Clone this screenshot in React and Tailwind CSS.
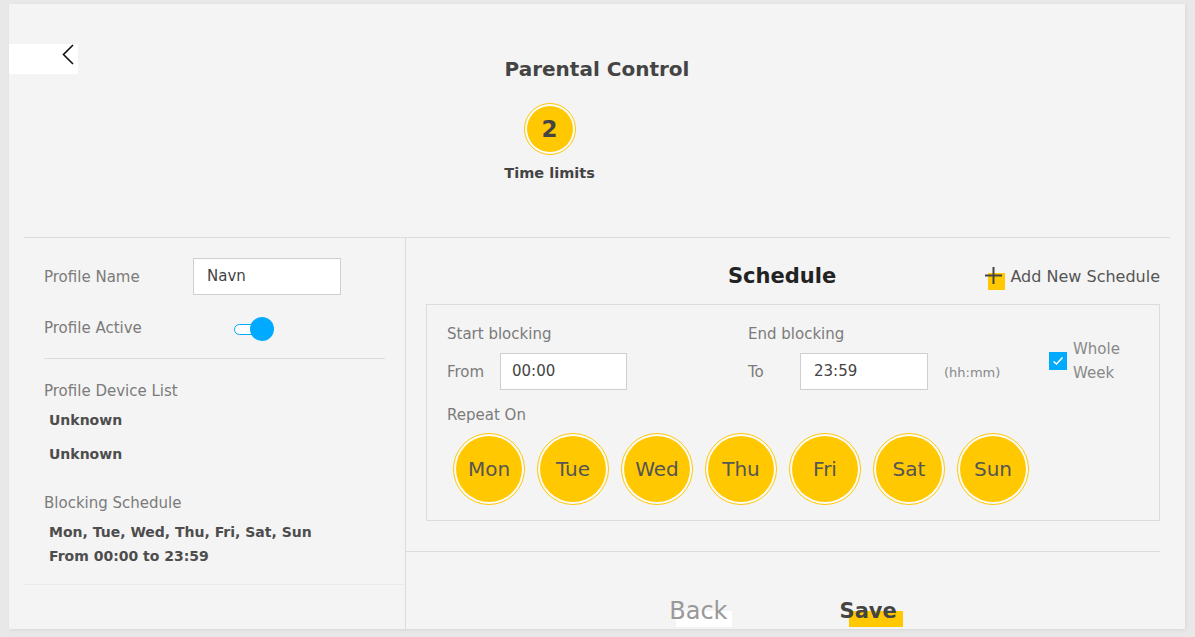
import React from "react";

const days = ["Mon", "Tue", "Wed", "Thu", "Fri", "Sat", "Sun"];

function Ring({ size, children, textClass }) {
  return (
    <div
      className={`${size} rounded-full border border-[#ffc800] p-[2px] bg-[#fbfbfb] flex`}
    >
      <div className={`flex-1 rounded-full bg-[#ffc800] flex items-center justify-center ${textClass}`}>
        {children}
      </div>
    </div>
  );
}

export default function App() {
  return (
    <div className="w-[1195px] h-[637px] bg-[#e8e8e8] pt-[4px] pl-[9px] font-['DejaVu_Sans',sans-serif] overflow-hidden">
      <div className="w-[1176px] h-[625px] bg-[#f4f4f4] shadow-[1px_1px_3px_rgba(0,0,0,0.08)] flex flex-col">
        {/* Header */}
        <div className="relative h-[233px] shrink-0">
          <div className="absolute left-0 top-[40px] w-[69px] h-[30px] bg-white">
            <svg className="absolute left-[53px] top-0" width="12" height="22" viewBox="0 0 12 22">
              <path d="M11 1 L1.5 10.5 L11 20" fill="none" stroke="#111" strokeWidth="1.6" />
            </svg>
          </div>
          <div className="w-fit mx-auto pt-[51px] flex flex-col items-start">
            <div className="text-[20px] leading-[28px] font-bold text-[#444]">Parental Control</div>
            <div className="w-[90px] flex flex-col items-center">
              <div className="mt-[20px]">
                <Ring size="w-[52px] h-[52px]" textClass="text-[23px] font-bold text-[#444]">2</Ring>
              </div>
              <div className="mt-[8px] text-[14.5px] leading-[20px] font-bold text-[#444] whitespace-nowrap">Time limits</div>
            </div>
          </div>
        </div>
        <div className="mx-[15px] border-t border-[#dcdcdc]" />
        {/* Body */}
        <div className="flex flex-1 ml-[15px] mr-[16px]">
          {/* Left */}
          <div className="w-[382px] border-r border-[#dcdcdc] flex flex-col">
            <div className="px-[20px] pt-[20px]">
              <div className="flex items-center h-[37px]">
                <div className="w-[149px] text-[15px] text-[#7b7b7b] pt-[2px]">Profile Name</div>
                <div className="w-[148px] h-[37px] bg-white border border-[#cfcfcf] flex items-center pl-[13px] text-[15px] text-[#444]">Navn</div>
              </div>
              <div className="flex items-center h-[24px] mt-[22px]">
                <div className="w-[190px] text-[15px] text-[#7b7b7b] pb-[2px]">Profile Active</div>
                <div className="relative w-[40px] h-[24px]">
                  <div className="absolute left-0 top-[7px] w-[30px] h-[11px] rounded-full border border-[#00aaff] bg-white" />
                  <div className="absolute left-[16px] top-0 w-[24px] h-[24px] rounded-full bg-[#00aaff]" />
                </div>
              </div>
              <div className="mt-[17px] border-t border-[#dcdcdc]" />
              <div className="mt-[22px] text-[15px] leading-[20px] text-[#7b7b7b]">Profile Device List</div>
              <div className="mt-[9px] pl-[5px] text-[14px] leading-[20px] font-bold text-[#4d4d4d]">Unknown</div>
              <div className="mt-[14px] pl-[5px] text-[14px] leading-[20px] font-bold text-[#4d4d4d]">Unknown</div>
              <div className="mt-[29px] text-[15px] leading-[20px] text-[#7b7b7b]">Blocking Schedule</div>
              <div className="mt-[9px] pl-[5px] text-[14px] leading-[20px] font-bold text-[#4d4d4d]">Mon, Tue, Wed, Thu, Fri, Sat, Sun</div>
              <div className="mt-[4px] pl-[5px] text-[14px] leading-[20px] font-bold text-[#4d4d4d]">From 00:00 to 23:59</div>
            </div>
            <div className="mt-[18px] border-t border-[#ebebeb]" />
          </div>
          {/* Right */}
          <div className="flex-1 flex flex-col">
            <div className="mt-[24px] ml-[20px] mr-[9px] h-[30px] flex items-center">
              <div className="ml-[302px] text-[21px] font-bold text-[#222]">Schedule</div>
              <div className="ml-auto flex items-center">
                <div className="relative w-[20px] h-[20px] mr-[5px]">
                  <div className="absolute left-[3px] top-[6px] w-[17px] h-[17px] bg-[#ffc800]" />
                  <svg className="absolute left-0 top-0" width="18" height="18" viewBox="0 0 18 18">
                    <path d="M0 8.5 H17 M8.5 0 V17" stroke="#444" strokeWidth="2" />
                  </svg>
                </div>
                <div className="text-[16px] text-[#555]">Add New Schedule</div>
              </div>
            </div>
            <div className="mt-[12px] ml-[20px] mr-[9px] h-[217px] border border-[#dcdcdc] pl-[20px] pt-[19px]">
              <div className="flex">
                <div className="w-[301px]">
                  <div className="text-[15px] leading-[20px] text-[#7b7b7b]">Start blocking</div>
                  <div className="mt-[9px] flex items-center">
                    <div className="w-[53px] text-[15px] text-[#7b7b7b] pt-[2px]">From</div>
                    <div className="w-[127px] h-[37px] bg-white border border-[#cfcfcf] flex items-center pl-[11px] text-[15px] text-[#444]">00:00</div>
                  </div>
                </div>
                <div className="w-[301px]">
                  <div className="text-[15px] leading-[20px] text-[#7b7b7b]">End blocking</div>
                  <div className="mt-[9px] flex items-center">
                    <div className="w-[52px] text-[15px] text-[#7b7b7b] pt-[2px]">To</div>
                    <div className="w-[128px] h-[37px] bg-white border border-[#cfcfcf] flex items-center pl-[13px] text-[15px] text-[#444]">23:59</div>
                    <div className="ml-[16px] text-[13px] text-[#888] pt-[2px]">(hh:mm)</div>
                  </div>
                </div>
                <div className="mt-[8px] flex items-center">
                  <div className="w-[18px] h-[18px] bg-[#00aaff] flex items-center justify-center">
                    <svg width="12" height="10" viewBox="0 0 12 10">
                      <path d="M1.5 5.5 L4.5 8 L10.5 1.5" fill="none" stroke="#fff" strokeWidth="1.6" />
                    </svg>
                  </div>
                  <div className="ml-[6px] text-[15px] leading-[24px] text-[#888]">
                    <div>Whole</div>
                    <div>Week</div>
                  </div>
                </div>
              </div>
              <div className="mt-[15px] text-[15px] leading-[20px] text-[#7b7b7b]">Repeat On</div>
              <div className="mt-[8px] ml-[6px] flex gap-[12px]">
                {days.map((d) => (
                  <Ring key={d} size="w-[72px] h-[72px]" textClass="text-[20px] text-[#555]">{d}</Ring>
                ))}
              </div>
            </div>
            <div className="mt-[30px] mr-[9px] border-t border-[#dcdcdc]" />
            <div className="mt-[47px] mr-[9px] flex justify-center gap-[112px]">
              <div className="relative">
                <div className="absolute left-[7px] top-[12px] w-[56px] h-[16px] bg-white" />
                <div className="relative text-[24px] leading-[24px] text-[#999]">Back</div>
              </div>
              <div className="relative">
                <div className="absolute left-[9px] top-[12px] w-[54px] h-[16px] bg-[#ffc800]" />
                <div className="relative text-[21px] leading-[24px] font-bold text-[#444]">Save</div>
              </div>
            </div>
          </div>
        </div>
      </div>
    </div>
  );
}
